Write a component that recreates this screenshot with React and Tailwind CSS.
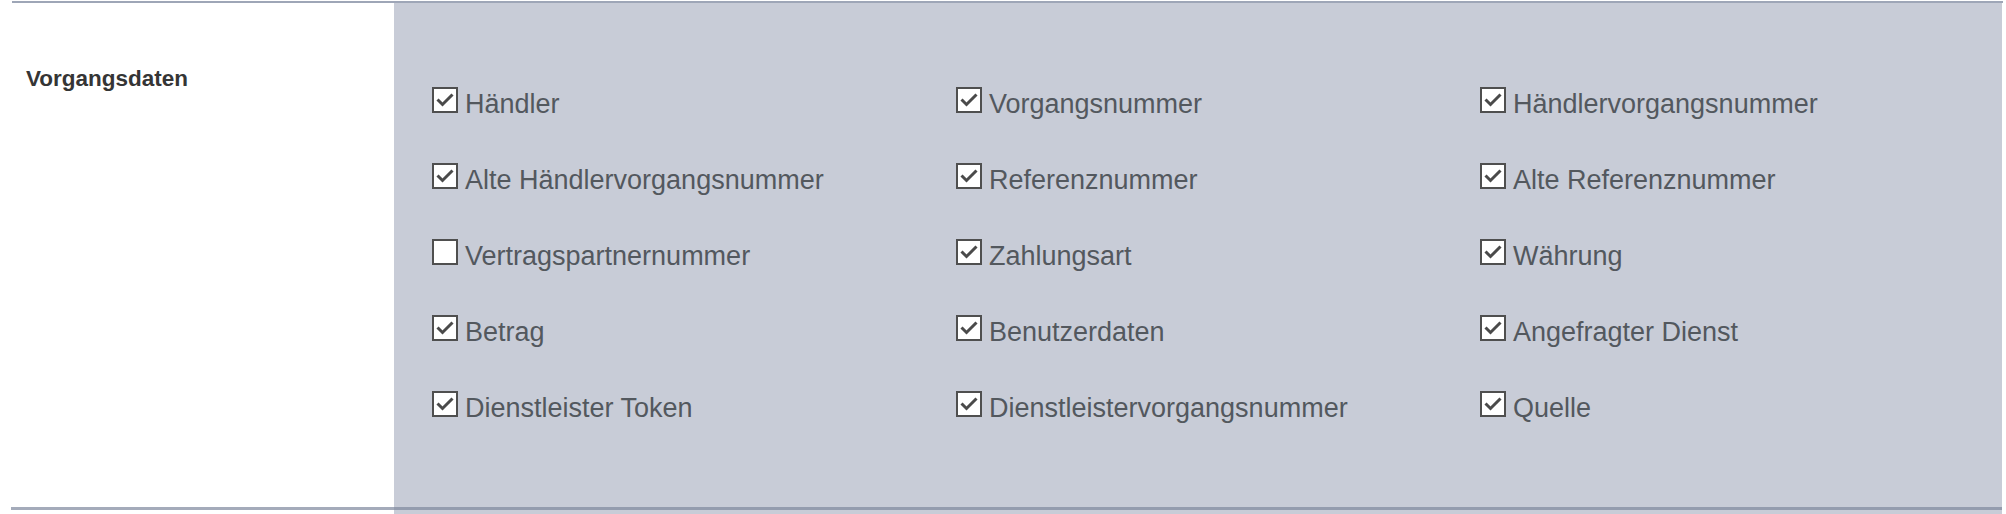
const fields = [
  { label: 'Händler', checked: true },
  { label: 'Vorgangsnummer', checked: true },
  { label: 'Händlervorgangsnummer', checked: true },
  { label: 'Alte Händlervorgangsnummer', checked: true },
  { label: 'Referenznummer', checked: true },
  { label: 'Alte Referenznummer', checked: true },
  { label: 'Vertragspartnernummer', checked: false },
  { label: 'Zahlungsart', checked: true },
  { label: 'Währung', checked: true },
  { label: 'Betrag', checked: true },
  { label: 'Benutzerdaten', checked: true },
  { label: 'Angefragter Dienst', checked: true },
  { label: 'Dienstleister Token', checked: true },
  { label: 'Dienstleistervorgangsnummer', checked: true },
  { label: 'Quelle', checked: true },
];

const Box = ({ checked }) => (
  <div className="h-[26px] w-[26px] shrink-0 border-2 border-[#4f4f4f] bg-white">
    {checked && (
      <svg viewBox="0 0 22 22" className="h-full w-full">
        <polyline points="3.5,10.5 8.5,15.5 18.5,5.5" fill="none" stroke="#4a4a4a" strokeWidth="3" />
      </svg>
    )}
  </div>
);

const Field = ({ label, checked }) => (
  <label className="flex items-start gap-[7px]">
    <Box checked={checked} />
    <span className="mt-[4px] text-[27px] leading-[26px] text-[#53585e] whitespace-nowrap">{label}</span>
  </label>
);

export default function App() {
  return (
    <div className="relative h-[514px] w-[2006px] overflow-hidden bg-white [font-family:'Liberation_Sans',Arial,sans-serif]">
      <div className="ml-[12px] mr-[3px] mt-[1px] h-[2px] bg-[#9ea6b7]" />
      <div className="mr-[4px] flex h-[511px]">
        <div className="w-[394px] shrink-0 pl-[26px] pt-[65px]">
          <h3 className="text-[22.5px] font-bold leading-[22px] text-[#353535]">Vorgangsdaten</h3>
        </div>
        <div className="flex-1 bg-[#c8ccd7] pl-[38px] pt-[84px]">
          <div className="grid grid-cols-[524px_524px_1fr] auto-rows-[76px]">
            {fields.map((f) => (
              <Field key={f.label} label={f.label} checked={f.checked} />
            ))}
          </div>
        </div>
      </div>
      <div className="absolute left-[11px] right-[4px] top-[507px] h-[3px] bg-[#7d879c]/70" />
    </div>
  );
}
